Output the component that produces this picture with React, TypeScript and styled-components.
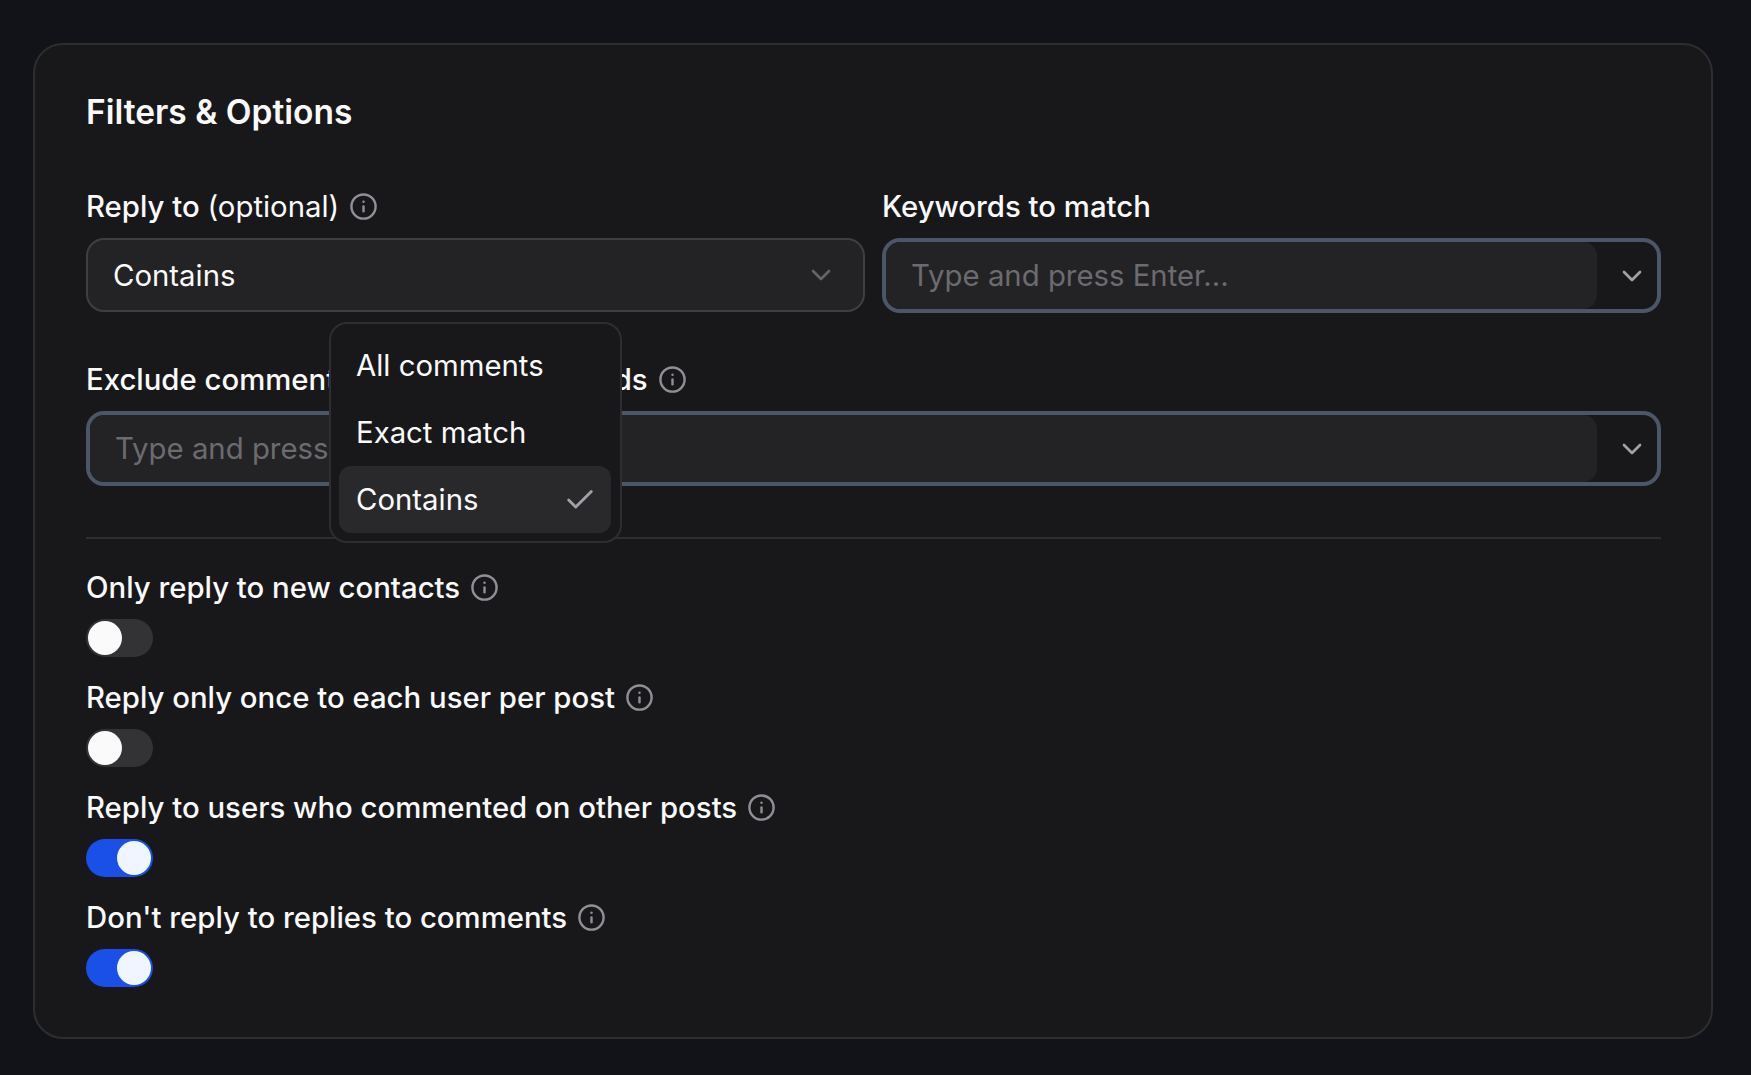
import React from "react";
import styled, { createGlobalStyle } from "styled-components";
import { Info, ChevronDown, Check } from "lucide-react";

const Global = createGlobalStyle`
  html, body { margin: 0; padding: 0; background: #111318; }
  * { box-sizing: border-box; }
  body { font-family: Inter, "Liberation Sans", sans-serif; color: #fafafa; }
`;

const Page = styled.div`
  min-height: 1075px;
  padding: 43px 38px 36px 33px;
  background: #111318;
`;

const Card = styled.section`
  height: 996px;
  border: 2px solid #2e2e31;
  border-radius: 30px;
  background: #18181b;
  padding: 45px 50px 0 51px;
  display: flex;
  flex-direction: column;
`;

const Title = styled.h2`
  margin: 0 0 55px;
  font-size: 33.5px;
  line-height: 44px;
  font-weight: 600;
  color: #fafafa;
`;

const Grid = styled.div`
  display: grid;
  grid-template-columns: 1fr 1fr;
  column-gap: 17px;
  row-gap: 49px;
`;

const Field = styled.div<{ $wide?: boolean }>`
  position: relative;
  min-width: 0;
  grid-column: ${(p) => (p.$wide ? "1 / span 2" : "auto")};
`;

const LabelRow = styled.div`
  display: flex;
  align-items: center;
  gap: 10px;
  height: 34px;
  margin-bottom: 15px;
  font-size: 29.33px;
  font-weight: 500;
  color: #fafafa;
  white-space: nowrap;
`;

const LabelNote = styled.span`
  font-weight: 400;
`;

const InfoIcon = styled(Info)`
  color: #8f8f95;
  flex: none;
`;

const SelectBox = styled.div`
  height: 74px;
  border: 2px solid #3f3f42;
  border-radius: 18px;
  background: #232325;
  display: flex;
  align-items: center;
  justify-content: space-between;
  padding: 0 25px;
  font-size: 29.33px;
  color: #fafafa;
`;

const DimChevron = styled(ChevronDown)`
  color: #8f8f95;
  opacity: 0.6;
  margin-right: 1px;
`;

const ComboBox = styled.div`
  height: 75px;
  border: 4px solid #4b5768;
  border-radius: 18px;
  background: #18181b;
  display: flex;
  align-items: stretch;
  overflow: hidden;
`;

const ComboInput = styled.div`
  flex: 1;
  min-width: 0;
  background: #232325;
  border-radius: 14px;
  display: flex;
  align-items: center;
  padding-left: 25px;
  font-size: 29.33px;
  color: #6b6b70;
`;

const ComboToggle = styled.div`
  width: 60px;
  flex: none;
  display: flex;
  align-items: center;
  justify-content: center;
  padding-left: 10px;
  color: #a1a1a8;
`;

const Menu = styled.div`
  position: absolute;
  left: 243px;
  top: 133px;
  width: 293px;
  height: 221px;
  padding: 8px 9px 8px 8px;
  border: 2px solid #2e2e31;
  border-radius: 18px;
  background: #18181b;
  z-index: 5;
`;

const MenuItem = styled.div<{ $selected?: boolean }>`
  height: 67px;
  display: flex;
  align-items: center;
  justify-content: space-between;
  padding: 0 14px 0 17px;
  border-radius: 12px;
  font-size: 29.33px;
  color: #fafafa;
  background: ${(p) => (p.$selected ? "#29292c" : "transparent")};
`;

const CheckMark = styled(Check)`
  color: #a1a1a8;
`;

const Divider = styled.hr`
  width: 100%;
  margin: 51px 0 31px;
  border: 0;
  height: 2px;
  background: #2e2e31;
`;

const ToggleList = styled.div`
  display: flex;
  flex-direction: column;
  gap: 23px;
`;

const ToggleRow = styled.div`
  display: flex;
  flex-direction: column;
  align-items: flex-start;
`;

const Switch = styled.div<{ $on?: boolean }>`
  width: 67px;
  height: 38px;
  padding: 2px;
  border-radius: 19px;
  background: ${(p) => (p.$on ? "#1a4fe8" : "#333336")};
  display: flex;
  justify-content: ${(p) => (p.$on ? "flex-end" : "flex-start")};
`;

const Thumb = styled.div<{ $on?: boolean }>`
  width: 34px;
  height: 34px;
  border-radius: 50%;
  background: ${(p) => (p.$on ? "#eff6ff" : "#fafafa")};
`;

const toggles = [
  { label: "Only reply to new contacts", on: false },
  { label: "Reply only once to each user per post", on: false },
  { label: "Reply to users who commented on other posts", on: true },
  { label: "Don't reply to replies to comments", on: true },
];

export default function App() {
  return (
    <Page>
      <Global />
      <Card>
        <Title>Filters &amp; Options</Title>
        <Grid>
          <Field>
            <LabelRow>
              <span>
                Reply to <LabelNote>(optional)</LabelNote>
              </span>
              <InfoIcon size={29} />
            </LabelRow>
            <SelectBox>
              Contains
              <DimChevron size={32} />
            </SelectBox>
            <Menu>
              <MenuItem>All comments</MenuItem>
              <MenuItem>Exact match</MenuItem>
              <MenuItem $selected>
                Contains
                <CheckMark size={34} />
              </MenuItem>
            </Menu>
          </Field>
          <Field>
            <LabelRow>Keywords to match</LabelRow>
            <ComboBox>
              <ComboInput>Type and press Enter...</ComboInput>
              <ComboToggle>
                <ChevronDown size={32} />
              </ComboToggle>
            </ComboBox>
          </Field>
          <Field $wide>
            <LabelRow>
              <span>
                Exclude comments <LabelNote>containing</LabelNote> keywords
              </span>
              <InfoIcon size={29} />
            </LabelRow>
            <ComboBox>
              <ComboInput>Type and press Enter...</ComboInput>
              <ComboToggle>
                <ChevronDown size={32} />
              </ComboToggle>
            </ComboBox>
          </Field>
        </Grid>
        <Divider />
        <ToggleList>
          {toggles.map((t) => (
            <ToggleRow key={t.label}>
              <LabelRow>
                {t.label} <InfoIcon size={29} />
              </LabelRow>
              <Switch $on={t.on}>
                <Thumb $on={t.on} />
              </Switch>
            </ToggleRow>
          ))}
        </ToggleList>
      </Card>
    </Page>
  );
}
